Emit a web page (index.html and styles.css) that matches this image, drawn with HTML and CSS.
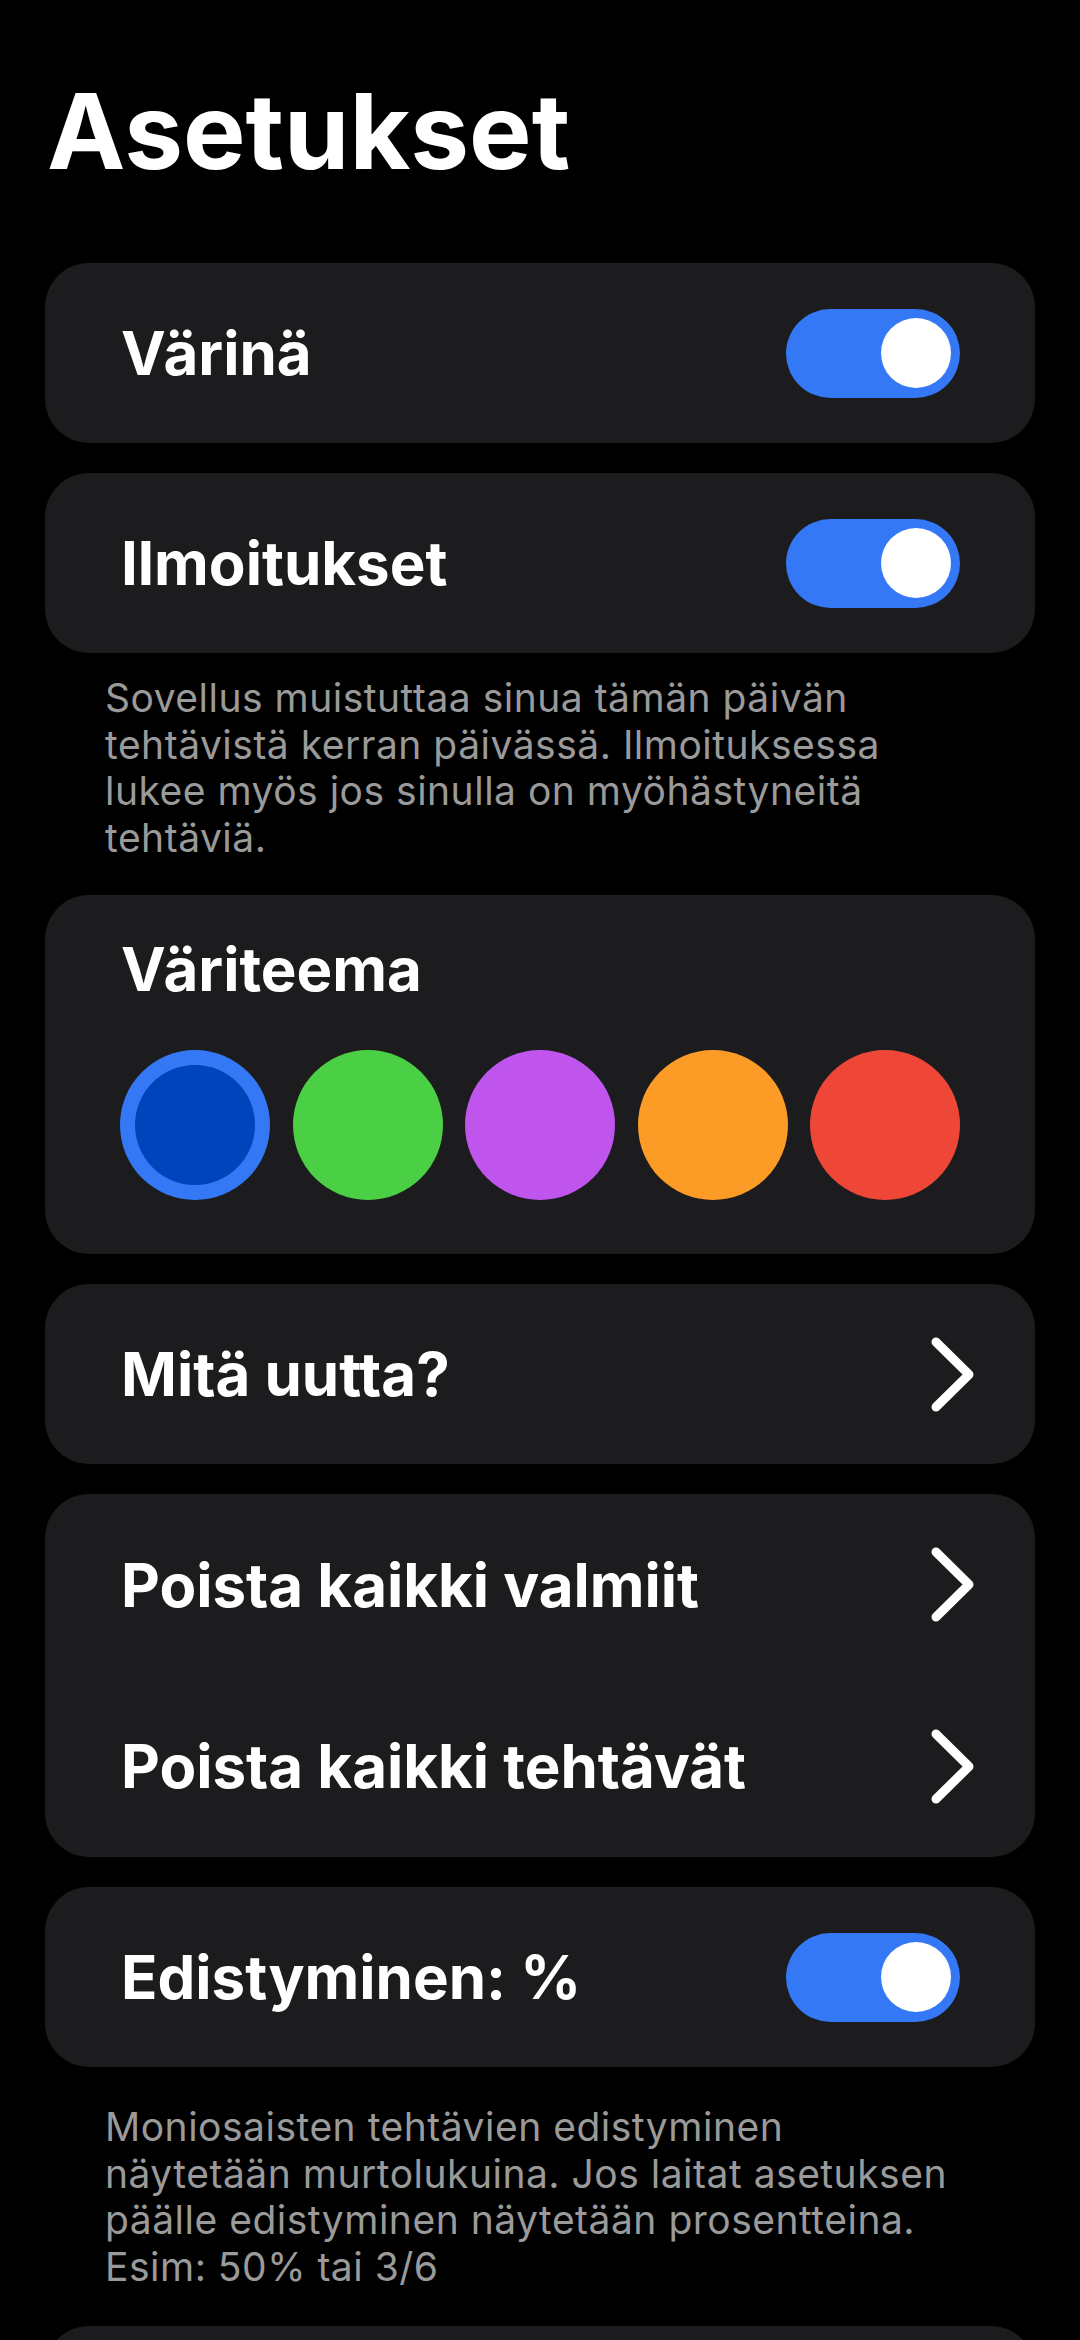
FILE: index.html
```html
<!DOCTYPE html>
<html lang="fi">
<head>
<meta charset="utf-8">
<title>Asetukset</title>
<link rel="stylesheet" href="styles.css">
</head>
<body>
<main class="screen">
  <h1 class="title">Asetukset</h1>

  <section class="card">
    <div class="row">
      <span class="label">Värinä</span>
      <span class="toggle on"><span class="knob"></span></span>
    </div>
  </section>

  <section class="card">
    <div class="row">
      <span class="label">Ilmoitukset</span>
      <span class="toggle on"><span class="knob"></span></span>
    </div>
  </section>
  <p class="note note-first">Sovellus muistuttaa sinua tämän päivän tehtävistä kerran päivässä. Ilmoituksessa lukee myös jos sinulla on myöhästyneitä tehtäviä.</p>

  <section class="card theme">
    <h2 class="label theme-title">Väriteema</h2>
    <div class="swatches">
      <span class="swatch selected"><span class="swatch-inner blue"></span></span>
      <span class="swatch green"></span>
      <span class="swatch purple"></span>
      <span class="swatch orange"></span>
      <span class="swatch red"></span>
    </div>
  </section>

  <section class="card">
    <div class="row link">
      <span class="label">Mitä uutta?</span>
      <svg class="chevron" viewBox="0 0 45 75" width="45" height="75"><path d="M6 5 L39 37.5 L6 70"/></svg>
    </div>
  </section>

  <section class="card">
    <div class="row link tall">
      <span class="label">Poista kaikki valmiit</span>
      <svg class="chevron" viewBox="0 0 45 75" width="45" height="75"><path d="M6 5 L39 37.5 L6 70"/></svg>
    </div>
    <div class="row link tall">
      <span class="label">Poista kaikki tehtävät</span>
      <svg class="chevron" viewBox="0 0 45 75" width="45" height="75"><path d="M6 5 L39 37.5 L6 70"/></svg>
    </div>
  </section>

  <section class="card">
    <div class="row">
      <span class="label">Edistyminen: %</span>
      <span class="toggle on"><span class="knob"></span></span>
    </div>
  </section>
  <p class="note note-second">Moniosaisten tehtävien edistyminen näytetään murtolukuina. Jos laitat asetuksen päälle edistyminen näytetään prosentteina. Esim: 50% tai 3/6</p>

  <section class="card">
    <div class="row"></div>
  </section>
</main>
</body>
</html>
```

FILE: styles.css
```css
* {
  box-sizing: border-box;
}

html, body {
  margin: 0;
  padding: 0;
  background: #000000;
}

body {
  font-family: "Inter", "Roboto", "Liberation Sans", sans-serif;
  color: #ffffff;
}

.screen {
  display: flex;
  flex-direction: column;
  padding: 68px 45px 0 45px;
  height: 2340px;
  overflow: hidden;
}

.title {
  margin: 0 0 0 2px;
  font-size: 105px;
  line-height: 126px;
  font-weight: 700;
  letter-spacing: 0;
}

.card {
  flex: none;
  background: #1c1c1e;
  border-radius: 44px;
  margin-top: 30px;
}

.title + .card {
  margin-top: 69px;
}

.row {
  display: flex;
  align-items: center;
  justify-content: space-between;
  height: 180px;
  padding: 0 75px 0 76px;
}

.row.tall {
  height: 181.5px;
}

.row.link {
  padding-right: 60px;
}

.label {
  font-size: 60px;
  font-weight: 700;
  line-height: 72px;
  margin: 0;
}

.toggle {
  position: relative;
  flex: none;
  width: 174px;
  height: 89px;
  border-radius: 45px;
  background: #3478f6;
}

.toggle .knob {
  position: absolute;
  top: 9.5px;
  right: 9px;
  width: 70px;
  height: 70px;
  border-radius: 50%;
  background: #ffffff;
}

.chevron {
  flex: none;
  display: block;
}

.chevron path {
  fill: none;
  stroke: #ffffff;
  stroke-width: 9;
  stroke-linecap: round;
  stroke-linejoin: round;
}

.note {
  margin: 0;
  padding: 0 0 0 60px;
  width: 925px;
  font-size: 39px;
  line-height: 46.5px;
  font-weight: 400;
  letter-spacing: 0.5px;
  color: #9a9a9a;
}

.note-first {
  margin-top: 22px;
}

.note-first + .card {
  margin-top: 34px;
}

.note-second {
  margin-top: 37px;
}

.note-second + .card {
  margin-top: 36px;
}

.theme {
  padding: 38px 75px 54px 75px;
}

.theme-title {
  padding-left: 1px;
}

.swatches {
  display: flex;
  justify-content: space-between;
  margin-top: 45px;
}

.swatch {
  display: flex;
  align-items: center;
  justify-content: center;
  width: 150px;
  height: 150px;
  border-radius: 50%;
}

.swatch.selected {
  background: #3478f6;
}

.swatch-inner {
  width: 120px;
  height: 120px;
  border-radius: 50%;
}

.blue {
  background: #0044bb;
}

.green {
  background: #4bd045;
}

.purple {
  background: #bf55ed;
}

.orange {
  background: #fc9c27;
}

.red {
  background: #ee4738;
}
```
